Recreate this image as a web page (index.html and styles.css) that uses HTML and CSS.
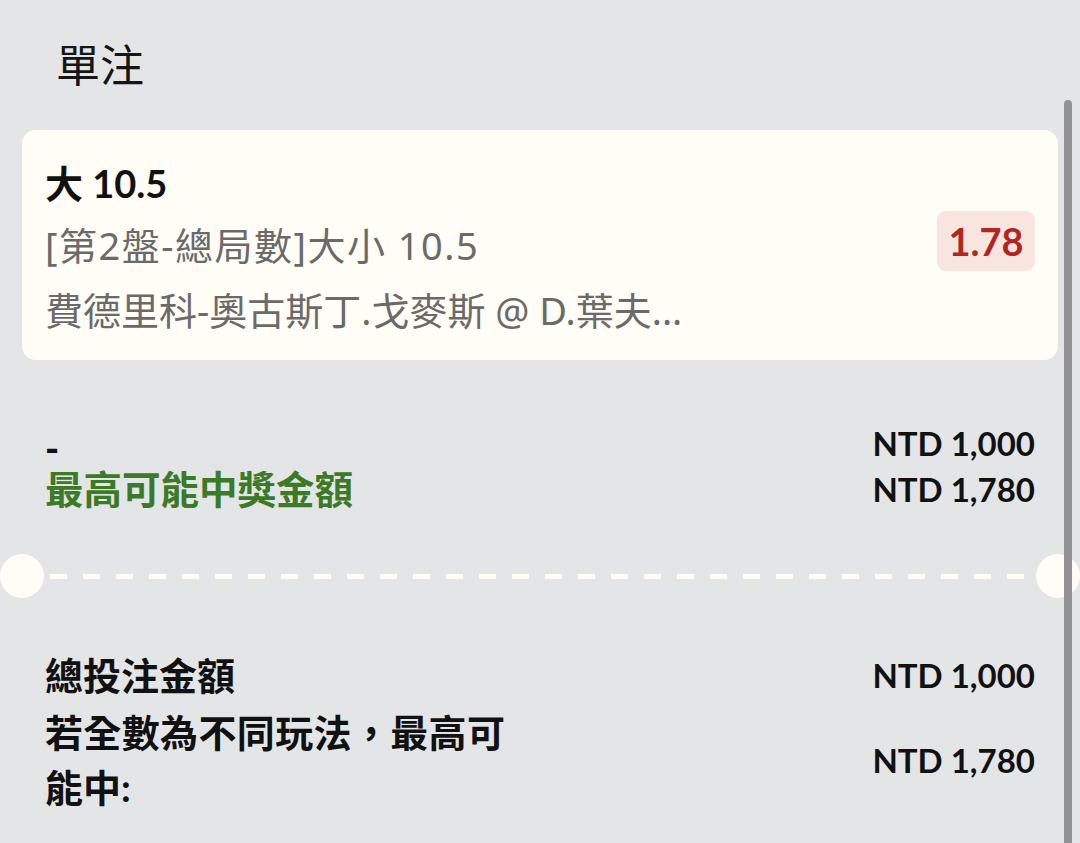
FILE: index.html
```html
<!DOCTYPE html>
<html lang="zh-Hant">
<head>
<meta charset="utf-8">
<title>單注</title>
<link rel="stylesheet" href="styles.css">
</head>
<body>
<div class="page">
  <div class="title">單注</div>

  <div class="card">
    <div class="card-info">
      <div class="pick">大 10.5</div>
      <div class="market">[第2盤-總局數]大小 10.5</div>
      <div class="event">費德里科-奧古斯丁.戈麥斯 @ D.葉夫...</div>
    </div>
    <div class="odds">1.78</div>
  </div>

  <div class="summary">
    <div class="row">
      <div class="label dash">-</div>
      <div class="amount">NTD 1,000</div>
    </div>
    <div class="row">
      <div class="label win">最高可能中獎金額</div>
      <div class="amount">NTD 1,780</div>
    </div>
  </div>

  <div class="divider">
    <span class="notch"></span>
    <span class="dashes"></span>
    <span class="notch"></span>
  </div>

  <div class="totals">
    <div class="row total-row">
      <div class="label">總投注金額</div>
      <div class="amount">NTD 1,000</div>
    </div>
    <div class="row multi-row">
      <div class="label multi">若全數為不同玩法，最高可能中:</div>
      <div class="amount">NTD 1,780</div>
    </div>
  </div>
</div>
<div class="scrollbar"></div>
</body>
</html>
```

FILE: styles.css
```css
html, body {
  margin: 0;
  padding: 0;
}

body {
  background: #e4e5e7;
  font-family: "Lato", "Noto Sans CJK TC", sans-serif;
  color: #111;
  width: 1080px;
  height: 843px;
  overflow: hidden;
  position: relative;
}

.page {
  padding: 0 22px;
}

.title {
  height: 126px;
  margin-bottom: 4px;
  display: flex;
  align-items: center;
  padding-left: 34px;
  font-family: "Noto Sans CJK TC", sans-serif;
  font-size: 44px;
  font-weight: 400;
  color: #151515;
}

.card {
  background: #fffdf6;
  border-radius: 14px;
  height: 230px;
  box-sizing: border-box;
  padding: 23px 23px 12px 23px;
  display: flex;
  align-items: flex-start;
  justify-content: space-between;
}

.card-info {
  display: flex;
  flex-direction: column;
}

.pick {
  font-size: 38px;
  font-weight: 700;
  line-height: 60px;
  height: 62px;
  color: #111;
}

.market,
.event {
  font-family: "Noto Sans", "Noto Sans CJK TC", sans-serif;
  font-size: 38px;
  color: #6a6a6a;
  white-space: nowrap;
}

.market {
  line-height: 60px;
  height: 60px;
  letter-spacing: 1.5px;
}

.event {
  line-height: 70px;
  height: 70px;
}

.odds {
  background: #f8e5df;
  color: #b2261f;
  font-weight: 700;
  font-size: 38px;
  border-radius: 9px;
  width: 98px;
  height: 60px;
  line-height: 60px;
  text-align: center;
  margin-top: 58px;
}

.row {
  display: flex;
  justify-content: space-between;
  align-items: center;
  padding: 0 23px;
}

.summary {
  padding-top: 60px;
}

.summary .row {
  height: 46px;
}

.label {
  font-size: 38px;
  font-weight: 700;
  color: #111;
}

.dash {
  font-size: 38px;
  font-weight: 900;
  line-height: 46px;
  margin-top: 8px;
}

.win {
  color: #3b7a26;
  font-size: 38.5px;
  line-height: 46px;
}

.amount {
  font-size: 33px;
  font-weight: 700;
  color: #111;
  white-space: nowrap;
}

.divider {
  height: 44px;
  margin: 42px -22px 0 -22px;
  display: flex;
  align-items: center;
}

.notch {
  width: 44px;
  height: 44px;
  border-radius: 50%;
  background: #fffdf6;
  flex: none;
}

.dashes {
  flex: 1;
  height: 5px;
  margin: 0 6px;
  background: repeating-linear-gradient(90deg, #fffdf6 0 17px, transparent 17px 33px);
}

.totals {
  padding-top: 52px;
}

.total-row {
  height: 50px;
}

.total-row .label {
  line-height: 50px;
}

.multi-row {
  margin-top: 5px;
}

.multi {
  width: 460px;
  line-height: 55px;
  text-align: justify;
}

.scrollbar {
  position: absolute;
  top: 100px;
  left: 1064px;
  width: 8px;
  height: 760px;
  border-radius: 4px;
  background: #929294;
}
```
